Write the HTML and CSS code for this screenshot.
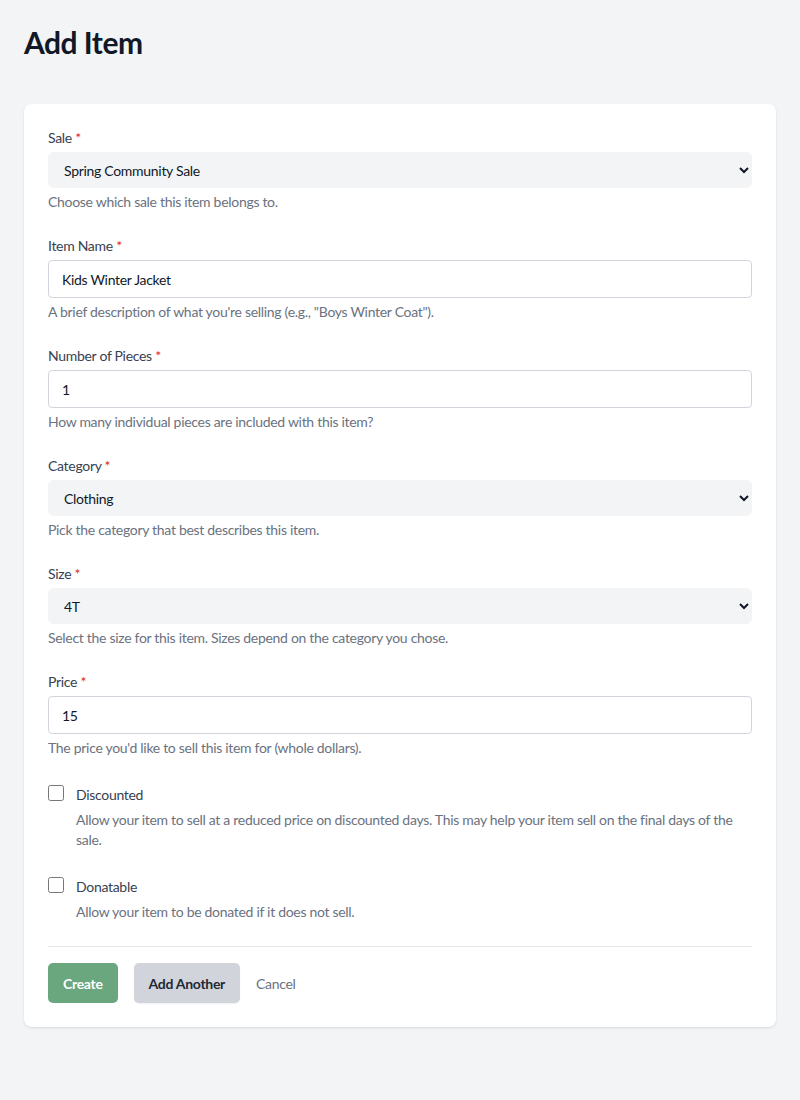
FILE: index.html
```html
<!DOCTYPE html>
<html lang="en">
<head>
<meta charset="utf-8">
<title>Add Item</title>
<link rel="stylesheet" href="styles.css">
</head>
<body>
<main class="page">
  <h1 class="title">Add Item</h1>
  <form class="card">
    <div class="field">
      <label class="label" for="sale">Sale <span class="req">*</span></label>
      <select id="sale" class="select">
        <option>Spring Community Sale</option>
      </select>
      <p class="help">Choose which sale this item belongs to.</p>
    </div>
    <div class="field">
      <label class="label" for="name">Item Name <span class="req">*</span></label>
      <input id="name" class="input" type="text" value="Kids Winter Jacket">
      <p class="help">A brief description of what you're selling (e.g., "Boys Winter Coat").</p>
    </div>
    <div class="field">
      <label class="label" for="pieces">Number of Pieces <span class="req">*</span></label>
      <input id="pieces" class="input" type="text" value="1">
      <p class="help">How many individual pieces are included with this item?</p>
    </div>
    <div class="field">
      <label class="label" for="category">Category <span class="req">*</span></label>
      <select id="category" class="select">
        <option>Clothing</option>
      </select>
      <p class="help">Pick the category that best describes this item.</p>
    </div>
    <div class="field">
      <label class="label" for="size">Size <span class="req">*</span></label>
      <select id="size" class="select">
        <option>4T</option>
      </select>
      <p class="help">Select the size for this item. Sizes depend on the category you chose.</p>
    </div>
    <div class="field">
      <label class="label" for="price">Price <span class="req">*</span></label>
      <input id="price" class="input" type="text" value="15">
      <p class="help">The price you'd like to sell this item for (whole dollars).</p>
    </div>
    <div class="check">
      <input id="discounted" class="checkbox" type="checkbox">
      <div class="check-body">
        <label class="check-label" for="discounted">Discounted</label>
        <p class="help">Allow your item to sell at a reduced price on discounted days. This may help your item sell on the final days of the sale.</p>
      </div>
    </div>
    <div class="check">
      <input id="donatable" class="checkbox" type="checkbox">
      <div class="check-body">
        <label class="check-label" for="donatable">Donatable</label>
        <p class="help">Allow your item to be donated if it does not sell.</p>
      </div>
    </div>
    <div class="actions">
      <button type="button" class="btn btn-primary">Create</button>
      <button type="button" class="btn btn-secondary">Add Another</button>
      <a class="cancel" href="#">Cancel</a>
    </div>
  </form>
</main>
</body>
</html>
```

FILE: styles.css
```css
* { box-sizing: border-box; }
html, body { margin: 0; padding: 0; }
body {
  background: #f3f4f6;
  font-family: "Lato", "Liberation Sans", sans-serif;
  color: #111827;
  letter-spacing: -0.3px;
}
.page { padding: 24px; }
.title {
  margin: 0;
  font-size: 30px;
  line-height: 36px;
  font-weight: 700;
  color: #111827;
  letter-spacing: -0.5px;
}
.card {
  margin-top: 44px;
  background: #fff;
  border-radius: 8px;
  box-shadow: 0 1px 3px rgba(0,0,0,0.08), 0 1px 2px rgba(0,0,0,0.04);
  padding: 24px;
  display: flex;
  flex-direction: column;
  gap: 24px;
}
.field { display: flex; flex-direction: column; }
.label {
  font-size: 14px;
  line-height: 20px;
  color: #374151;
  margin-bottom: 4px;
}
.req { color: #dc2626; }
.select {
  height: 36px;
  width: 100%;
  border: none;
  border-radius: 6px;
  background-color: #f3f4f6;
  padding: 0 12px;
  font-family: inherit;
  font-size: 14px;
  letter-spacing: -0.3px;
  color: #111827;
}
.input {
  height: 38px;
  width: 100%;
  border: 1px solid #d1d5db;
  border-radius: 4px;
  background: #fff;
  padding: 0 13px;
  font-family: inherit;
  font-size: 14px;
  letter-spacing: -0.3px;
  color: #111827;
}
.help {
  margin: 4px 0 0;
  font-size: 14px;
  line-height: 20px;
  color: #6b7280;
}
.check { display: flex; gap: 12px; align-items: flex-start; margin-top: 3px; }
.checkbox { width: 16px; height: 16px; margin: 0; flex: none; }
.check-body { display: flex; flex-direction: column; }
.check-label {
  font-size: 14px;
  line-height: 20px;
  color: #374151;
}
.check-body .help { margin-top: 5px; }
.actions {
  border-top: 1px solid #e5e7eb;
  padding-top: 16px;
  display: flex;
  align-items: center;
  gap: 16px;
}
.btn {
  height: 40px;
  padding: 0 15px;
  border: none;
  border-radius: 5px;
  font-family: inherit;
  font-size: 14px;
  font-weight: 700;
  letter-spacing: -0.3px;
}
.btn-primary { background: #6aa67e; color: #fff; }
.btn-secondary { background: #d1d5db; color: #1f2937; box-shadow: 0 1px 2px rgba(0,0,0,0.06); }
.cancel {
  font-size: 14px;
  color: #6b7280;
  text-decoration: none;
}
```
